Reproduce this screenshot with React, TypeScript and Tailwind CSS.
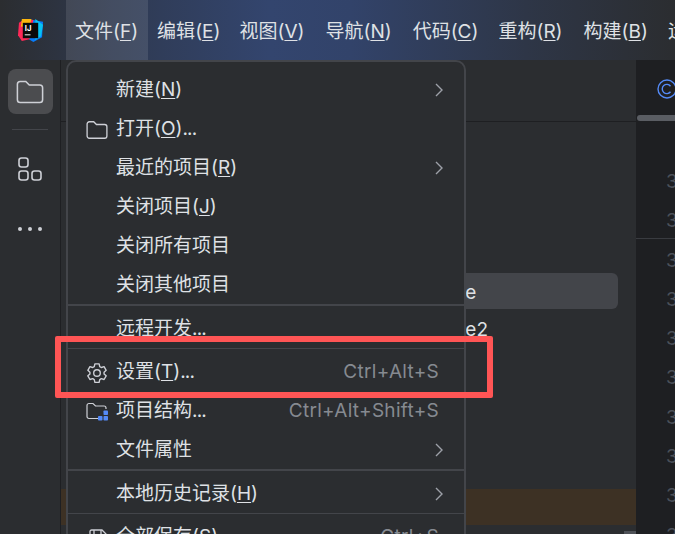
import { Fragment, type ReactNode } from 'react';

const FONT = "font-['Inter','Noto_Sans_CJK_SC',sans-serif]";

const MENUS: [string, string, string][] = [
  ['文件', 'F', 'pr-[10px] bg-white/10'], ['编辑', 'E', 'pr-[10px]'], ['视图', 'V', 'pr-[12px]'], ['导航', 'N', 'pr-[12px]'],
  ['代码', 'C', 'pr-[11px]'], ['重构', 'R', 'pr-[12px]'], ['构建', 'B', 'pr-[11px]'], ['运行', 'U', 'pr-[11px]'],
];

const LINE_COUNT = 10;

function FolderIcon({ size = 22, color = '#ced0d6', stroke = 1.2 }: { size?: number; color?: string; stroke?: number }) {
  return (
    <svg width={size} height={size} viewBox="0 0 20 20" fill="none" stroke={color} strokeWidth={stroke}>
      <path d="M1 4.5C1 3.4 1.9 2.5 3 2.5H7L9.5 5H17C18.1 5 19 5.9 19 7V15.5C19 16.6 18.1 17.5 17 17.5H3C1.9 17.5 1 16.6 1 15.5V4.5Z" />
    </svg>
  );
}

function GearIcon() {
  return (
    <svg width="22" height="22" viewBox="0 0 24 24" fill="none" stroke="#ced0d6" strokeWidth="1.5" strokeLinejoin="round">
      <path d="M9.7 2h4.6l.7 3 1.7 1 3-.9 2.3 4-2.3 2.1v1.8l2.3 2.1-2.3 4-3-.9-1.7 1-.7 3H9.7l-.7-3-1.7-1-3 .9-2.3-4 2.3-2.1v-1.8L2 9.1l2.3-4 3 .9 1.7-1z" />
      <circle cx="12" cy="12" r="3.6" />
    </svg>
  );
}

function ProjectIcon() {
  return (
    <svg width="22" height="20" viewBox="0 0 22 20" fill="none">
      <path d="M12 16.5H3C1.9 16.5 1 15.6 1 14.5V3.5C1 2.4 1.9 1.5 3 1.5H7L9.5 4H18C19 4 20 4.8 20 6V7" stroke="#ced0d6" strokeWidth="1.2" />
      <rect x="12" y="14" width="4.5" height="4.5" rx="0.8" fill="#548af7" />
      <rect x="17.5" y="14" width="4.5" height="4.5" rx="0.8" fill="#548af7" />
      <rect x="17.5" y="8.5" width="4.5" height="4.5" rx="0.8" fill="#548af7" />
    </svg>
  );
}

function SaveIcon() {
  return (
    <svg width="20" height="20" viewBox="0 0 20 20" fill="none" stroke="#ced0d6" strokeWidth="1.3">
      <path d="M2 3.5C2 2.7 2.7 2 3.5 2H14L18 6V16.5C18 17.3 17.3 18 16.5 18H3.5C2.7 18 2 17.3 2 16.5V3.5Z" />
      <path d="M6 2V7H13V2M5.5 18V11.5H14.5V18" />
    </svg>
  );
}

function Chevron() {
  return (
    <svg className="-mr-[4px] -mt-[1px]" width="8" height="14" viewBox="0 0 8 14" fill="none" stroke="#9da0a8" strokeWidth="1.4">
      <path d="M1 1L7 7L1 13" />
    </svg>
  );
}

function Logo() {
  return (
    <svg width="25" height="25" viewBox="0 0 26 26">
      <path d="M10 1L26 4L25 20L16 25L6 19Z" fill="#087cfa" />
      <path d="M18 1L26 7L24 19L18 23Z" fill="#07c3f2" />
      <path d="M1 5L7 1L16 2L12 22L4 24L0 18Z" fill="#fe2857" />
      <path d="M4 1L14 1L12 8L3 9Z" fill="#fdb60d" />
      <rect x="5" y="5" width="16" height="16" fill="#0a0a0a" />
      <text x="7" y="13" fontSize="8" fontWeight="700" fill="#ffffff" fontFamily="Inter, sans-serif">IJ</text>
      <rect x="7" y="17" width="6" height="1" fill="#ffffff" />
    </svg>
  );
}

function Separator({ thin }: { thin?: boolean }) {
  return <div className={`-mt-[1px] mb-[4px] bg-[#43454a] ${thin ? 'h-[1px]' : 'h-[2px]'}`} />;
}

function Item({ icon, label, mnemonic, tail = '', shortcut, sub }: {
  icon?: ReactNode; label: string; mnemonic?: string; tail?: string; shortcut?: string; sub?: boolean;
}) {
  return (
    <div className="flex h-[39px] items-center pr-[25px]">
      <div className="flex w-[48px] justify-end pr-[8px]">{icon}</div>
      <span className="flex-1 whitespace-nowrap text-[#dfe1e5]">
        {label}
        {mnemonic && <Fragment>(<u className="underline-offset-2">{mnemonic}</u>)</Fragment>}
        <span className="tracking-[-0.8px]">{tail}</span>
      </span>
      {shortcut && <span className="whitespace-nowrap tracking-[0.3px] text-[#868a91]">{shortcut}</span>}
      {sub && <Chevron />}
    </div>
  );
}

function FileMenu() {
  return (
    <div className="absolute left-[66px] top-[60px] w-[400px] rounded-t-[10px] border-2 border-[#43454a] bg-[#2b2d30] pt-[9px]">
      <Item label="新建" mnemonic="N" sub />
      <Item icon={<FolderIcon />} label="打开" mnemonic="O" tail="..." />
      <Item label="最近的项目" mnemonic="R" sub />
      <Item label="关闭项目" mnemonic="J" />
      <Item label="关闭所有项目" />
      <Item label="关闭其他项目" />
      <Separator />
      <Item label="远程开发" tail="..." />
      <Separator thin />
      <Item icon={<GearIcon />} label="设置" mnemonic="T" tail="..." shortcut="Ctrl+Alt+S" />
      <Item icon={<ProjectIcon />} label="项目结构" tail="..." shortcut="Ctrl+Alt+Shift+S" />
      <Item label="文件属性" sub />
      <Separator />
      <Item label="本地历史记录" mnemonic="H" sub />
      <Separator thin />
      <Item icon={<SaveIcon />} label="全部保存" mnemonic="S" shortcut="Ctrl+S" />
    </div>
  );
}

export default function App() {
  return (
    <div className={`relative flex h-[534px] w-[675px] flex-col overflow-hidden bg-[#2b2d30] text-[19px] ${FONT}`}>
      <header className="flex h-[60px] shrink-0 items-stretch bg-[linear-gradient(90deg,#2b2d30_0%,#2f3a52_18%,#33456e_40%,#32436a_52%,#2e3647_78%,#2b2d30_100%)]">
        <div className="flex w-[66px] shrink-0 items-center justify-center pr-[6px]">
          <Logo />
        </div>
        {MENUS.map(([name, key, cls]) => (
          <div
            key={name}
            className={`flex shrink-0 items-center whitespace-nowrap pl-[9px] pt-[4px] text-[#dfe1e5] ${cls}`}
          >
            {name}(<u className="underline-offset-2">{key}</u>)
          </div>
        ))}
      </header>

      <div className="flex min-h-0 flex-1">
        {/* tool window stripe */}
        <aside className="flex w-[61px] shrink-0 flex-col items-center border-r border-[#1e1f22] pt-[9px]">
          <div className="flex h-[45px] w-[45px] items-center justify-center rounded-[8px] bg-[#4b4c4f]">
            <FolderIcon size={28} stroke={1.1} />
          </div>
          <div className="mt-[15px] h-[1px] w-[36px] bg-[#43454a]" />
          <svg className="mt-[27px]" width="24" height="24" viewBox="0 0 24 24" fill="none" stroke="#ced0d6" strokeWidth="1.6">
            <rect x="1" y="1" width="9" height="9" rx="2.5" />
            <rect x="1" y="14" width="9" height="9" rx="2.5" />
            <rect x="14" y="14" width="9" height="9" rx="2.5" />
          </svg>
          <div className="mt-[46px] flex gap-[6px]">
            <span className="h-[4px] w-[4px] rounded-full bg-[#ced0d6]" />
            <span className="h-[4px] w-[4px] rounded-full bg-[#ced0d6]" />
            <span className="h-[4px] w-[4px] rounded-full bg-[#ced0d6]" />
          </div>
        </aside>

        {/* project panel, mostly under the menu */}
        <section className="flex w-[575px] shrink-0 flex-col">
          <div className="h-[62px] shrink-0 border-b border-[#1e1f22]" />
          <div className="ml-[10px] mr-[18px] mt-[151px] flex h-[36px] items-center rounded-r-[6px] bg-[#43454a] pl-[309px] pt-[5px] text-[#dfe1e5]">
            hello-cube
          </div>
          <div className="flex h-[37px] items-center pl-[319px] pt-[5px] text-[#dfe1e5]">hello-cube2</div>
          <div className="mt-[143px] h-[36px] shrink-0 bg-[#3d3124]" />
          <div className="ml-auto mt-[6px] h-[3px] w-[12px] bg-[#4e5157]" />
        </section>

        {/* editor */}
        <section className="flex min-w-0 flex-1 flex-col bg-[#1e1f22]">
          <div className="flex h-[55px] shrink-0 items-center pl-[21px] pt-[3px]">
            <svg width="20" height="20" viewBox="0 0 20 20" fill="none" className="shrink-0">
              <circle cx="10" cy="10" r="9" stroke="#548af7" strokeWidth="1.4" />
              <path d="M13.5 7.2A4.6 4.6 0 1 0 13.5 12.8" stroke="#548af7" strokeWidth="1.4" />
            </svg>
          </div>
          <div className="ml-[1px] h-[6px] shrink-0 rounded-l-[3px] bg-[#5a5d63]" />
          <div className="relative flex flex-col pl-[30px] pt-[41px] text-[#4b5059]">
            {Array.from({ length: LINE_COUNT }, (_, i) => (
              <div key={i} className="h-[39.3px] leading-[39.3px]">3</div>
            ))}
            <div className="absolute left-0 right-0 top-[117px] h-[1px] bg-[#393b40]" />
          </div>
        </section>
      </div>

      <FileMenu />

      {/* red annotation box */}
      <div className="pointer-events-none absolute left-[55px] top-[336px] h-[62px] w-[438px] rounded-[2px] border-[6px] border-[#ff5555]" />
    </div>
  );
}
